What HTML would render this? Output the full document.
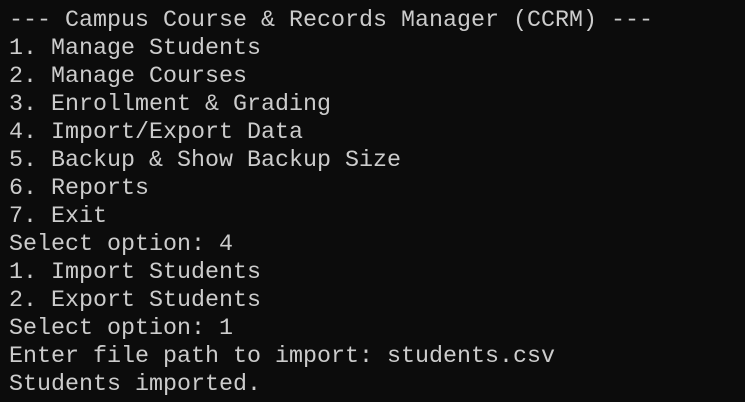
<!DOCTYPE html><html><head><style>
html,body{margin:0;padding:0;background:#0c0c0c;width:745px;height:402px;overflow:hidden}
pre{margin:0;padding:7px 0 0 9px;font-family:"Liberation Mono",monospace;font-size:23.33px;line-height:28px;color:#cccccc}
</style></head><body><pre>--- Campus Course &amp; Records Manager (CCRM) ---
1. Manage Students
2. Manage Courses
3. Enrollment &amp; Grading
4. Import/Export Data
5. Backup &amp; Show Backup Size
6. Reports
7. Exit
Select option: 4
1. Import Students
2. Export Students
Select option: 1
Enter file path to import: students.csv
Students imported.</pre></body></html>
